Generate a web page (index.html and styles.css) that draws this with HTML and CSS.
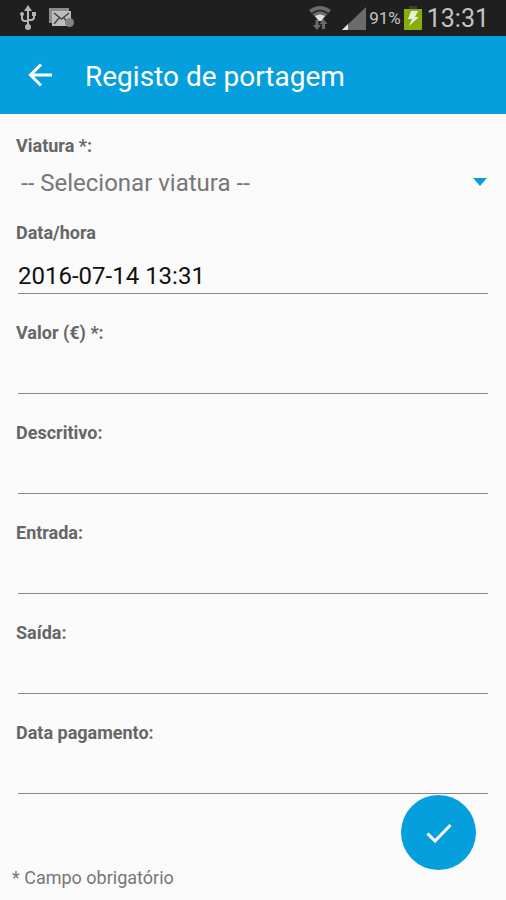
FILE: index.html
```html
<!DOCTYPE html>
<html lang="pt">
<head>
<meta charset="utf-8">
<meta name="viewport" content="width=device-width, initial-scale=1">
<title>Registo de portagem</title>
<link rel="stylesheet" href="styles.css">
</head>
<body>
<div class="status-bar">
  <div class="status-group notifications">
    <svg width="18" height="26" viewBox="0 0 18 26" fill="none" stroke="#b4b4b4" stroke-width="2" aria-hidden="true">
      <path d="M9 3v19M3 10v3q0 3 3 3h3M15 9v3q0 3-3 3H9"/>
      <path d="M9 0l4 6H5z" fill="#b4b4b4" stroke="none"/>
      <circle cx="3" cy="9" r="2" fill="#b4b4b4" stroke="none"/>
      <path d="M13 7h4v4h-4z" fill="#b4b4b4" stroke="none"/>
      <circle cx="9" cy="22" r="3" fill="#b4b4b4" stroke="none"/>
    </svg>
    <svg width="26" height="20" viewBox="0 0 26 20" aria-hidden="true">
      <path d="M0 0h20v4H3v11H0z" fill="#8c8c8c"/>
      <path d="M3 3h19v15H3z" fill="#bdbdbd"/>
      <path d="M5 5l7.500 6L20 5M5 16l5-6M20 16l-5-6" fill="none" stroke="#444" stroke-width="1.500"/>
      <circle cx="20.500" cy="14.500" r="4.500" fill="#858585"/>
    </svg>
  </div>
  <div class="status-group">
    <svg width="24" height="26" viewBox="0 0 24 26" aria-hidden="true">
      <path d="M1 5Q12-3 23 5L20.500 8Q12 1.500 3.500 8z" fill="#6b6b6b"/>
      <path d="M4.500 9Q12 3.500 19.500 9L17 12Q12 8 7 12z" fill="#6b6b6b"/>
      <path d="M7 11q5-3 10 0l-3.500 5h-3z" fill="#e0e0e0"/>
      <path d="M9 25l-4-5h2.500v-5h3v5H13zM15.500 14l4 5H17v5h-3v-5h-2.500z" fill="#6b6b6b"/>
    </svg>
    <svg class="signal" width="24" height="24" viewBox="0 0 24 24" aria-hidden="true">
      <path d="M0 24L24 1v23z" fill="#6b6b6b"/>
      <path d="M0 24l6-6v6z" fill="#e4e4e4"/>
    </svg>
    <span class="battery-level">91%</span>
    <svg class="battery" width="18" height="24" viewBox="0 0 18 24" aria-hidden="true">
      <path d="M5 0h8v3H5z" fill="#3c3c3c"/>
      <path d="M0 3h18v21H0z" fill="#84ae08"/>
      <path d="M7 5h7l-3 6h4L5 20l3-7H4z" fill="#e8eedc"/>
    </svg>
    <time class="clock">13:31</time>
  </div>
</div>
<header class="app-bar">
  <button class="back" type="button" aria-label="Voltar">
    <svg width="24" height="24" viewBox="0 0 24 24" fill="none" stroke="#fff" stroke-width="3" aria-hidden="true">
      <path d="M24 12H3M13 1.500L2.500 12 13 22.500"/>
    </svg>
  </button>
  <h1 class="title">Registo de portagem</h1>
</header>
<form class="form">
  <div class="field field-select">
    <label for="viatura">Viatura *:</label>
    <div class="select-row">
      <select id="viatura"><option>-- Selecionar viatura --</option></select>
      <svg class="caret" width="14" height="8" viewBox="0 0 14 8" aria-hidden="true"><path d="M0 0h14L7 8z" fill="#069fde"/></svg>
    </div>
  </div>
  <div class="field">
    <label for="data">Data/hora</label>
    <input id="data" type="text" value="2016-07-14 13:31">
  </div>
  <div class="field">
    <label for="valor">Valor (€) *:</label>
    <input id="valor" type="text">
  </div>
  <div class="field">
    <label for="descritivo">Descritivo:</label>
    <input id="descritivo" type="text">
  </div>
  <div class="field">
    <label for="entrada">Entrada:</label>
    <input id="entrada" type="text">
  </div>
  <div class="field">
    <label for="saida">Saída:</label>
    <input id="saida" type="text">
  </div>
  <div class="field">
    <label for="pagamento">Data pagamento:</label>
    <input id="pagamento" type="text">
  </div>
  <p class="note">* Campo obrigatório</p>
  <button class="fab" type="submit" aria-label="Guardar">
    <svg width="26" height="20" viewBox="0 0 26 20" fill="none" stroke="#fff" stroke-width="3" aria-hidden="true">
      <path d="M1.500 10.500L9 18 24.500 2"/>
    </svg>
  </button>
</form>
</body>
</html>
```
FILE: styles.css
```css
* {
  box-sizing: border-box;
}

body {
  margin: 0;
  min-height: 100vh;
  display: flex;
  flex-direction: column;
  background: #fafafa;
  color: #666;
  font-family: Roboto, "Liberation Sans", sans-serif;
}

.status-bar {
  display: flex;
  justify-content: space-between;
  height: 36px;
  padding: 0 17px 0 19px;
  background: #1f1f1f;
  color: #c4c4c4;
}

.status-group {
  display: flex;
  align-items: center;
}

.notifications {
  gap: 12px;
}

.signal {
  margin-left: 10px;
}

.battery-level {
  margin: 0 3px;
  font-size: 17px;
}

.clock {
  margin-left: 5px;
  font-size: 25px;
}

.app-bar {
  display: flex;
  align-items: center;
  gap: 33px;
  height: 78px;
  padding: 0 28px;
  background: #069fde;
  color: #fff;
}

.back {
  display: flex;
  padding: 0;
  border: 0;
  background: none;
}

.title {
  margin: 0;
  padding-top: 2px;
  font-size: 28px;
  font-weight: 400;
}

.form {
  position: relative;
  flex: 1;
  display: flex;
  flex-direction: column;
  padding: 20px 16px 10px;
}

.field {
  display: flex;
  flex-direction: column;
  margin-bottom: 27px;
}

.field-select {
  margin-bottom: 13px;
}

label {
  font-size: 18px;
  font-weight: 700;
  line-height: 24px;
}

.select-row {
  display: grid;
  align-items: center;
  height: 50px;
  padding: 0 3px 0 5px;
}

select,
.caret {
  grid-area: 1 / 1;
}

.caret {
  justify-self: end;
  margin-bottom: 2px;
  pointer-events: none;
}

select {
  appearance: none;
  width: 100%;
  height: 50px;
  padding: 0;
  border: 0;
  background: none;
  color: #777;
  font: 24px Roboto, "Liberation Sans", sans-serif;
}

input {
  height: 49px;
  margin: 0 2px;
  padding: 13px 0 0;
  border: 0;
  border-bottom: 1px solid #888;
  border-radius: 0;
  background: none;
  color: #111;
  font: 24px Roboto, "Liberation Sans", sans-serif;
}

.note {
  margin: auto -4px 0;
  color: #777;
  font-size: 18px;
  line-height: 24px;
}

.fab {
  position: absolute;
  right: 30px;
  bottom: 30px;
  display: flex;
  align-items: center;
  justify-content: center;
  width: 75px;
  height: 75px;
  padding: 0;
  border: 0;
  border-radius: 50%;
  background: #069fde;
}
```
